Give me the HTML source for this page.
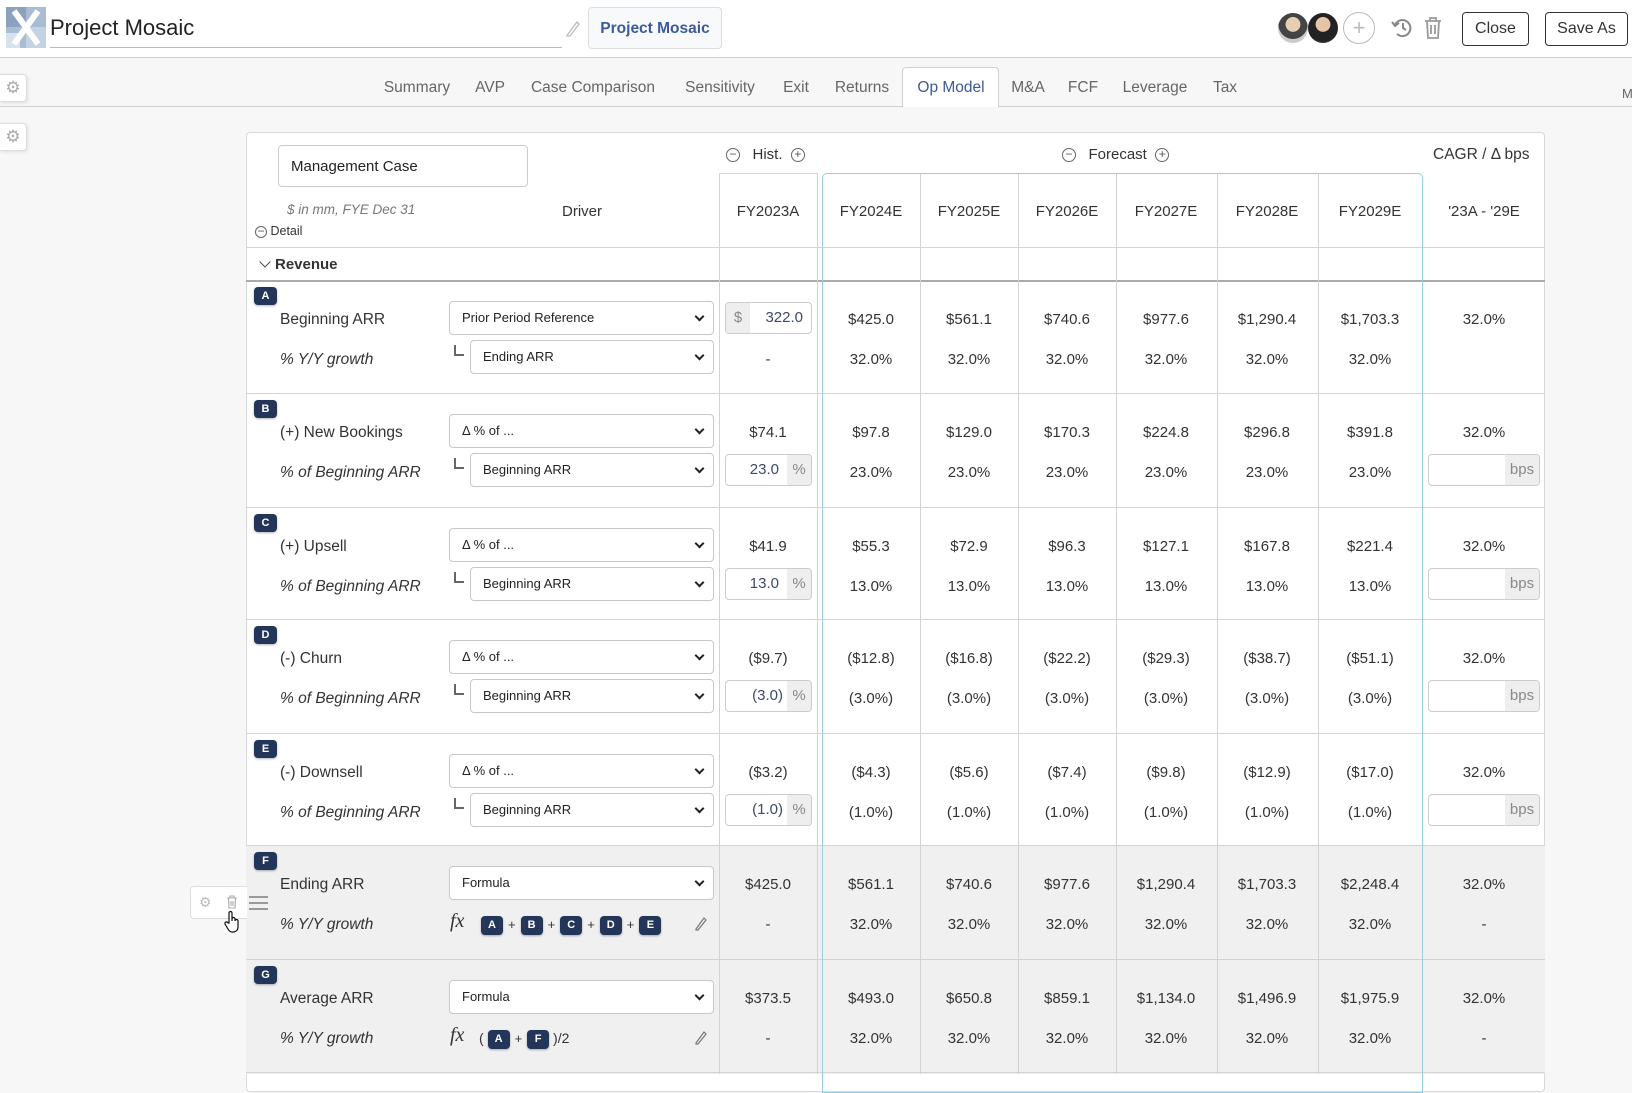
<!DOCTYPE html>
<html><head><meta charset="utf-8"><style>
*{box-sizing:border-box;margin:0;padding:0}
body{width:1632px;height:1074px;overflow:hidden;background:#f7f7f7;font-family:"Liberation Sans",sans-serif;color:#333;position:relative}
.abs{position:absolute}
.hdr{position:absolute;left:0;top:0;width:1632px;height:58px;background:#fff;border-bottom:1px solid #d0d0d0}
.btn{position:absolute;border:1px solid #333;border-radius:4px;background:#fff;font-size:16px;text-align:center;line-height:32px}
.tab{position:absolute;top:79px;font-size:15.5px;color:#666;transform:translateX(-50%);white-space:nowrap}
.panel{position:absolute;left:246px;top:132px;width:1299px;height:960px;background:#fff;border:1px solid #d8d8d8;border-radius:4px}
.vl{position:absolute;width:1px;background:#d3d3d3}
.row{position:absolute;left:246px;width:1299px;height:113px;border-bottom:1px solid #d3d3d3}
.row.g{background:#f0f0f0}
.bd{position:absolute;left:8px;top:6px;width:23px;height:18px;background:#233659;border-radius:4px;color:#fff;font-weight:bold;font-size:11px;text-align:center;line-height:18px;box-shadow:0 1px 2px rgba(0,0,0,.3)}
.l1{position:absolute;left:34px;top:29px;font-size:15.5px;line-height:20px;color:#333}
.l2{position:absolute;left:34px;top:69px;font-size:15.5px;line-height:20px;font-style:italic;color:#333}
.sel{position:absolute;height:34px;border:1px solid #c8c8c8;border-radius:4px;background:#fff;font-size:13px;line-height:32px;padding-left:12px;color:#222}
.sel:after{content:"";position:absolute;right:10px;top:11px;width:5px;height:5px;border-right:2px solid #222;border-bottom:2px solid #222;transform:rotate(45deg)}
.s1{left:203px;top:20px;width:265px}
.s2{left:224px;top:59px;width:244px}
.cr{position:absolute;left:208px;top:64px;width:10px;height:11px;border-left:2px solid #666;border-bottom:2px solid #666}
.v{position:absolute;width:100px;text-align:center;font-size:15px;line-height:20px;color:#333}
.t1{top:29px}.t2{top:69px}
.inp{position:absolute;height:32px;border:1px solid #ccc;border-radius:4px;background:#fff;font-size:15px;line-height:30px;color:#3a4a6a;overflow:hidden}
.pre{position:absolute;top:0;height:30px;background:#eee;color:#888;text-align:center;font-size:15px}
.fx{position:absolute;font-family:"Liberation Serif",serif;font-style:italic;font-size:20px;top:64px}
.chip{display:inline-block;width:22px;height:19px;background:#233659;border-radius:4px;color:#fff;font-weight:bold;font-size:11px;text-align:center;line-height:19px;vertical-align:middle;box-shadow:0 1px 2px rgba(0,0,0,.3)}
.fm{position:absolute;top:70px;font-size:14px;color:#333;white-space:nowrap}
.fm i{font-style:normal;margin:0 5px;font-size:13px}
.hd{position:absolute;top:203px;width:100px;text-align:center;font-size:15px;color:#333}
.circ{display:inline-block;width:14px;height:14px;border:1px solid #666;border-radius:50%;font-size:12px;line-height:11px;text-align:center;color:#555;vertical-align:middle}
</style></head><body>

<div class="hdr"></div>
<svg class="abs" style="left:6px;top:7px" width="40" height="41" viewBox="0 0 40 41"><rect width="40" height="41" fill="#a9bcd2"/><rect x="0" y="0" width="20" height="20" fill="#8aa1c0"/><rect x="20" y="20" width="20" height="21" fill="#c4d2e2"/><rect x="0" y="26" width="14" height="15" fill="#d6e2ee"/><path d="M8 4 L32 37 M32 4 L8 37" stroke="#fff" stroke-width="6"/></svg>
<div class="abs" style="left:50px;top:15px;font-size:22px;color:#222">Project Mosaic</div>
<div class="abs" style="left:50px;top:47px;width:512px;height:1px;background:#bbb"></div>
<svg class="abs" style="left:565px;top:19px" width="16" height="18" viewBox="0 0 16 18"><path d="M3 15 L12 3 L14 5 L5 17 L2 17 Z" fill="none" stroke="#bbb" stroke-width="1.3"/></svg>
<div class="abs" style="left:588px;top:7px;width:134px;height:42px;border:1px solid #ddd;border-radius:4px;background:#f8f9fb;color:#3d5a98;font-size:15.5px;font-weight:bold;text-align:center;line-height:42px">Project Mosaic</div>
<div class="abs" style="left:1278px;top:13px;width:30px;height:30px;border-radius:50%;background:radial-gradient(circle at 50% 38%,#e8cdb5 0 30%,#444 32% 60%,#ccc 62%)"></div>
<div class="abs" style="left:1308px;top:13px;width:30px;height:30px;border-radius:50%;background:radial-gradient(circle at 50% 38%,#e6c4a8 0 30%,#222 32% 70%,#333 72%)"></div>
<div class="abs" style="left:1343px;top:12px;width:32px;height:32px;border-radius:50%;border:1px solid #bbb;color:#bbb;text-align:center;line-height:29px;font-size:22px">+</div>
<svg class="abs" style="left:1390px;top:17px" width="24" height="22" viewBox="0 0 24 22"><path d="M5 8 A8 8 0 1 1 7 17" fill="none" stroke="#888" stroke-width="2"/><path d="M2 5 L5 9 L9 6" fill="none" stroke="#888" stroke-width="2"/><path d="M13 6 V11 L16 13" fill="none" stroke="#888" stroke-width="2"/></svg>
<svg class="abs" style="left:1423px;top:16px" width="20" height="24" viewBox="0 0 20 24"><path d="M2 5 H18 M7 5 V2 H13 V5 M4 5 L5 22 H15 L16 5 M8 9 V18 M12 9 V18" fill="none" stroke="#999" stroke-width="1.8"/></svg>
<div class="btn" style="left:1462px;top:12px;width:67px;height:34px">Close</div>
<div class="btn" style="left:1545px;top:12px;width:83px;height:34px">Save As</div>

<div class="abs" style="left:0;top:106px;width:1632px;height:1px;background:#d0d0d0"></div>
<div class="abs" style="left:902px;top:67px;width:97px;height:40px;background:#fff;border:1px solid #d0d0d0;border-bottom:none;border-radius:4px 4px 0 0"></div>
<div class="tab" style="left:417px">Summary</div>
<div class="tab" style="left:490px">AVP</div>
<div class="tab" style="left:593px">Case Comparison</div>
<div class="tab" style="left:720px">Sensitivity</div>
<div class="tab" style="left:796px">Exit</div>
<div class="tab" style="left:862px">Returns</div>
<div class="tab" style="left:951px;color:#3d5a98">Op Model</div>
<div class="tab" style="left:1028px">M&amp;A</div>
<div class="tab" style="left:1083px">FCF</div>
<div class="tab" style="left:1155px">Leverage</div>
<div class="tab" style="left:1225px">Tax</div>
<div class="abs" style="left:1622px;top:86px;font-size:13px;color:#666">M</div>
<div class="abs" style="left:0;top:74px;width:27px;height:28px;background:#fff;border:1px solid #ddd;border-left:none;border-radius:0 4px 4px 0;box-shadow:1px 1px 3px rgba(0,0,0,.1);color:#aaa;text-align:center;line-height:26px;font-size:17px">⚙</div>
<div class="abs" style="left:0;top:123px;width:27px;height:28px;background:#fff;border:1px solid #ddd;border-left:none;border-radius:0 4px 4px 0;box-shadow:1px 1px 3px rgba(0,0,0,.1);color:#aaa;text-align:center;line-height:26px;font-size:17px">⚙</div>

<div class="panel"></div>
<div class="abs" style="left:278px;top:145px;width:250px;height:42px;border:1px solid #ccc;border-radius:4px;background:#fff;font-size:15px;line-height:42px;padding-left:12px;color:#222">Management Case</div>
<div class="abs" style="left:287px;top:202px;font-size:13.5px;font-style:italic;color:#777">$ in mm, FYE Dec 31</div>
<div class="abs" style="left:255px;top:224px;font-size:12.5px;color:#333"><span class="circ" style="width:12px;height:12px;line-height:9px">−</span> Detail</div>
<div class="abs" style="left:552px;top:203px;width:60px;text-align:center;font-size:15px">Driver</div>
<div class="abs" style="left:726px;top:146px;font-size:15px;color:#333"><span class="circ">−</span>&nbsp;&nbsp; Hist. &nbsp;<span class="circ">+</span></div>
<div class="abs" style="left:1062px;top:146px;font-size:15px;color:#333"><span class="circ">−</span>&nbsp;&nbsp; Forecast &nbsp;<span class="circ">+</span></div>
<div class="abs" style="left:1433px;top:146px;font-size:15.5px;color:#333">CAGR / Δ bps</div>

<div class="hd" style="left:718px">FY2023A</div>
<div class="hd" style="left:821px">FY2024E</div>
<div class="hd" style="left:919px">FY2025E</div>
<div class="hd" style="left:1017px">FY2026E</div>
<div class="hd" style="left:1116px">FY2027E</div>
<div class="hd" style="left:1217px">FY2028E</div>
<div class="hd" style="left:1320px">FY2029E</div>
<div class="hd" style="left:1434px">'23A - '29E</div>

<div class="abs" style="left:261px;top:258px;width:8px;height:8px;border-right:1.5px solid #444;border-bottom:1.5px solid #444;transform:rotate(45deg)"></div>
<div class="abs" style="left:275px;top:256px;font-size:15px;font-weight:bold;color:#333">Revenue</div>

<div class="row" style="top:281px">
<div class="bd">A</div><div class="l1">Beginning ARR</div><div class="l2">% Y/Y growth</div>
<div class="sel s1">Prior Period Reference</div><div class="cr"></div><div class="sel s2">Ending ARR</div>
<div class="inp" style="left:479px;top:21px;width:87px;text-align:right;padding-right:8px"><div class="pre" style="left:0;width:24px">$</div>322.0</div>
<div class="v t2" style="left:472px">-</div>
<div class="v t1" style="left:575px">$425.0</div><div class="v t1" style="left:673px">$561.1</div><div class="v t1" style="left:771px">$740.6</div><div class="v t1" style="left:870px">$977.6</div><div class="v t1" style="left:971px">$1,290.4</div><div class="v t1" style="left:1074px">$1,703.3</div><div class="v t1" style="left:1188px">32.0%</div>
<div class="v t2" style="left:575px">32.0%</div><div class="v t2" style="left:673px">32.0%</div><div class="v t2" style="left:771px">32.0%</div><div class="v t2" style="left:870px">32.0%</div><div class="v t2" style="left:971px">32.0%</div><div class="v t2" style="left:1074px">32.0%</div>
</div>

<div class="row" style="top:394px;height:114px">
<div class="bd">B</div><div class="l1">(+) New Bookings</div><div class="l2">% of Beginning ARR</div>
<div class="sel s1">Δ % of ...</div><div class="cr"></div><div class="sel s2">Beginning ARR</div>
<div class="v t1" style="left:472px">$74.1</div>
<div class="inp" style="left:479px;top:60px;width:87px;text-align:right;padding-right:32px">23.0<div class="pre" style="right:0;width:24px">%</div></div>
<div class="v t1" style="left:575px">$97.8</div><div class="v t1" style="left:673px">$129.0</div><div class="v t1" style="left:771px">$170.3</div><div class="v t1" style="left:870px">$224.8</div><div class="v t1" style="left:971px">$296.8</div><div class="v t1" style="left:1074px">$391.8</div><div class="v t1" style="left:1188px">32.0%</div>
<div class="v t2" style="left:575px">23.0%</div><div class="v t2" style="left:673px">23.0%</div><div class="v t2" style="left:771px">23.0%</div><div class="v t2" style="left:870px">23.0%</div><div class="v t2" style="left:971px">23.0%</div><div class="v t2" style="left:1074px">23.0%</div>
<div class="inp" style="left:1182px;top:60px;width:112px"><div class="pre" style="right:0;width:34px">bps</div></div>
</div>

<div class="row" style="top:508px;height:112px">
<div class="bd">C</div><div class="l1">(+) Upsell</div><div class="l2">% of Beginning ARR</div>
<div class="sel s1">Δ % of ...</div><div class="cr"></div><div class="sel s2">Beginning ARR</div>
<div class="v t1" style="left:472px">$41.9</div>
<div class="inp" style="left:479px;top:60px;width:87px;text-align:right;padding-right:32px">13.0<div class="pre" style="right:0;width:24px">%</div></div>
<div class="v t1" style="left:575px">$55.3</div><div class="v t1" style="left:673px">$72.9</div><div class="v t1" style="left:771px">$96.3</div><div class="v t1" style="left:870px">$127.1</div><div class="v t1" style="left:971px">$167.8</div><div class="v t1" style="left:1074px">$221.4</div><div class="v t1" style="left:1188px">32.0%</div>
<div class="v t2" style="left:575px">13.0%</div><div class="v t2" style="left:673px">13.0%</div><div class="v t2" style="left:771px">13.0%</div><div class="v t2" style="left:870px">13.0%</div><div class="v t2" style="left:971px">13.0%</div><div class="v t2" style="left:1074px">13.0%</div>
<div class="inp" style="left:1182px;top:60px;width:112px"><div class="pre" style="right:0;width:34px">bps</div></div>
</div>

<div class="row" style="top:620px;height:114px">
<div class="bd">D</div><div class="l1">(-) Churn</div><div class="l2">% of Beginning ARR</div>
<div class="sel s1">Δ % of ...</div><div class="cr"></div><div class="sel s2">Beginning ARR</div>
<div class="v t1" style="left:472px">($9.7)</div>
<div class="inp" style="left:479px;top:60px;width:87px;text-align:right;padding-right:28px">(3.0)<div class="pre" style="right:0;width:24px">%</div></div>
<div class="v t1" style="left:575px">($12.8)</div><div class="v t1" style="left:673px">($16.8)</div><div class="v t1" style="left:771px">($22.2)</div><div class="v t1" style="left:870px">($29.3)</div><div class="v t1" style="left:971px">($38.7)</div><div class="v t1" style="left:1074px">($51.1)</div><div class="v t1" style="left:1188px">32.0%</div>
<div class="v t2" style="left:575px">(3.0%)</div><div class="v t2" style="left:673px">(3.0%)</div><div class="v t2" style="left:771px">(3.0%)</div><div class="v t2" style="left:870px">(3.0%)</div><div class="v t2" style="left:971px">(3.0%)</div><div class="v t2" style="left:1074px">(3.0%)</div>
<div class="inp" style="left:1182px;top:60px;width:112px"><div class="pre" style="right:0;width:34px">bps</div></div>
</div>

<div class="row" style="top:734px;height:112px">
<div class="bd">E</div><div class="l1">(-) Downsell</div><div class="l2">% of Beginning ARR</div>
<div class="sel s1">Δ % of ...</div><div class="cr"></div><div class="sel s2">Beginning ARR</div>
<div class="v t1" style="left:472px">($3.2)</div>
<div class="inp" style="left:479px;top:60px;width:87px;text-align:right;padding-right:28px">(1.0)<div class="pre" style="right:0;width:24px">%</div></div>
<div class="v t1" style="left:575px">($4.3)</div><div class="v t1" style="left:673px">($5.6)</div><div class="v t1" style="left:771px">($7.4)</div><div class="v t1" style="left:870px">($9.8)</div><div class="v t1" style="left:971px">($12.9)</div><div class="v t1" style="left:1074px">($17.0)</div><div class="v t1" style="left:1188px">32.0%</div>
<div class="v t2" style="left:575px">(1.0%)</div><div class="v t2" style="left:673px">(1.0%)</div><div class="v t2" style="left:771px">(1.0%)</div><div class="v t2" style="left:870px">(1.0%)</div><div class="v t2" style="left:971px">(1.0%)</div><div class="v t2" style="left:1074px">(1.0%)</div>
<div class="inp" style="left:1182px;top:60px;width:112px"><div class="pre" style="right:0;width:34px">bps</div></div>
</div>

<div class="row g" style="top:846px;height:114px">
<div class="bd">F</div><div class="l1">Ending ARR</div><div class="l2">% Y/Y growth</div>
<div class="sel s1">Formula</div>
<div class="fx" style="left:204px">fx</div>
<div class="fm" style="left:235px"><span class="chip">A</span><i>+</i><span class="chip">B</span><i>+</i><span class="chip">C</span><i>+</i><span class="chip">D</span><i>+</i><span class="chip">E</span></div>
<svg class="abs" style="left:448px;top:69px" width="14" height="16" viewBox="0 0 14 16"><path d="M2 14 L10 3 L12 5 L4 15 L2 15 Z" fill="none" stroke="#777" stroke-width="1.2"/></svg>
<div class="v t1" style="left:472px">$425.0</div><div class="v t2" style="left:472px">-</div>
<div class="v t1" style="left:575px">$561.1</div><div class="v t1" style="left:673px">$740.6</div><div class="v t1" style="left:771px">$977.6</div><div class="v t1" style="left:870px">$1,290.4</div><div class="v t1" style="left:971px">$1,703.3</div><div class="v t1" style="left:1074px">$2,248.4</div><div class="v t1" style="left:1188px">32.0%</div>
<div class="v t2" style="left:575px">32.0%</div><div class="v t2" style="left:673px">32.0%</div><div class="v t2" style="left:771px">32.0%</div><div class="v t2" style="left:870px">32.0%</div><div class="v t2" style="left:971px">32.0%</div><div class="v t2" style="left:1074px">32.0%</div><div class="v t2" style="left:1188px">-</div>
</div>

<div class="row g" style="top:960px;height:114px;border-bottom:none">
<div class="bd">G</div><div class="l1">Average ARR</div><div class="l2">% Y/Y growth</div>
<div class="sel s1">Formula</div>
<div class="fx" style="left:204px">fx</div>
<div class="fm" style="left:233px">( <span class="chip">A</span><i>+</i><span class="chip">F</span> )/2</div>
<svg class="abs" style="left:448px;top:69px" width="14" height="16" viewBox="0 0 14 16"><path d="M2 14 L10 3 L12 5 L4 15 L2 15 Z" fill="none" stroke="#777" stroke-width="1.2"/></svg>
<div class="v t1" style="left:472px">$373.5</div><div class="v t2" style="left:472px">-</div>
<div class="v t1" style="left:575px">$493.0</div><div class="v t1" style="left:673px">$650.8</div><div class="v t1" style="left:771px">$859.1</div><div class="v t1" style="left:870px">$1,134.0</div><div class="v t1" style="left:971px">$1,496.9</div><div class="v t1" style="left:1074px">$1,975.9</div><div class="v t1" style="left:1188px">32.0%</div>
<div class="v t2" style="left:575px">32.0%</div><div class="v t2" style="left:673px">32.0%</div><div class="v t2" style="left:771px">32.0%</div><div class="v t2" style="left:870px">32.0%</div><div class="v t2" style="left:971px">32.0%</div><div class="v t2" style="left:1074px">32.0%</div><div class="v t2" style="left:1188px">-</div>
</div>
<div class="abs" style="left:246px;top:1072px;width:1299px;height:1px;background:#d3d3d3"></div>

<div class="abs" style="left:246px;top:247px;width:1299px;height:1px;background:#d3d3d3"></div>
<div class="abs" style="left:246px;top:280px;width:1299px;height:2px;background:#aaa"></div>
<div class="vl" style="left:719px;top:173px;height:901px"></div>
<div class="vl" style="left:817px;top:173px;height:901px"></div>
<div class="vl" style="left:920px;top:173px;height:901px"></div>
<div class="vl" style="left:1018px;top:173px;height:901px"></div>
<div class="vl" style="left:1116px;top:173px;height:901px"></div>
<div class="vl" style="left:1217px;top:173px;height:901px"></div>
<div class="vl" style="left:1318px;top:173px;height:901px"></div>
<div class="abs" style="left:719px;top:173px;width:99px;height:1px;background:#d3d3d3"></div>
<div class="abs" style="left:822px;top:173px;width:601px;height:920px;border:1px solid #8fd3e3;border-radius:5px 5px 0 0"></div>

<div class="abs" style="left:190px;top:886px;width:57px;height:33px;background:#fff;border:1px solid #ddd;border-right:none;border-radius:4px 0 0 4px;color:#bbb;font-size:14px;line-height:31px;padding-left:8px">⚙</div>
<svg class="abs" style="left:226px;top:895px" width="12" height="14" viewBox="0 0 12 14"><path d="M1 3 H11 M4 3 V1 H8 V3 M2.5 3 L3 13 H9 L9.5 3 M5 6 V11 M7 6 V11" fill="none" stroke="#aaa" stroke-width="1.1"/></svg>
<div class="abs" style="left:249px;top:896px;width:19px;height:2px;background:#999;box-shadow:0 6px 0 #999,0 12px 0 #999"></div>
<svg class="abs" style="left:224px;top:910px" width="18" height="24" viewBox="0 0 18 24"><path d="M5 13 V3 a1.5 1.5 0 0 1 3 0 V11 V9 a1.5 1.5 0 0 1 3 0 V11 a1.5 1.5 0 0 1 3 0 V17 c0 3 -2 5 -5 5 h-1 c-2 0 -3 -1 -4 -3 L1 14 a1.5 1.5 0 0 1 3 -1 Z" fill="#fff" stroke="#111" stroke-width="1.2"/></svg>
</body></html>
